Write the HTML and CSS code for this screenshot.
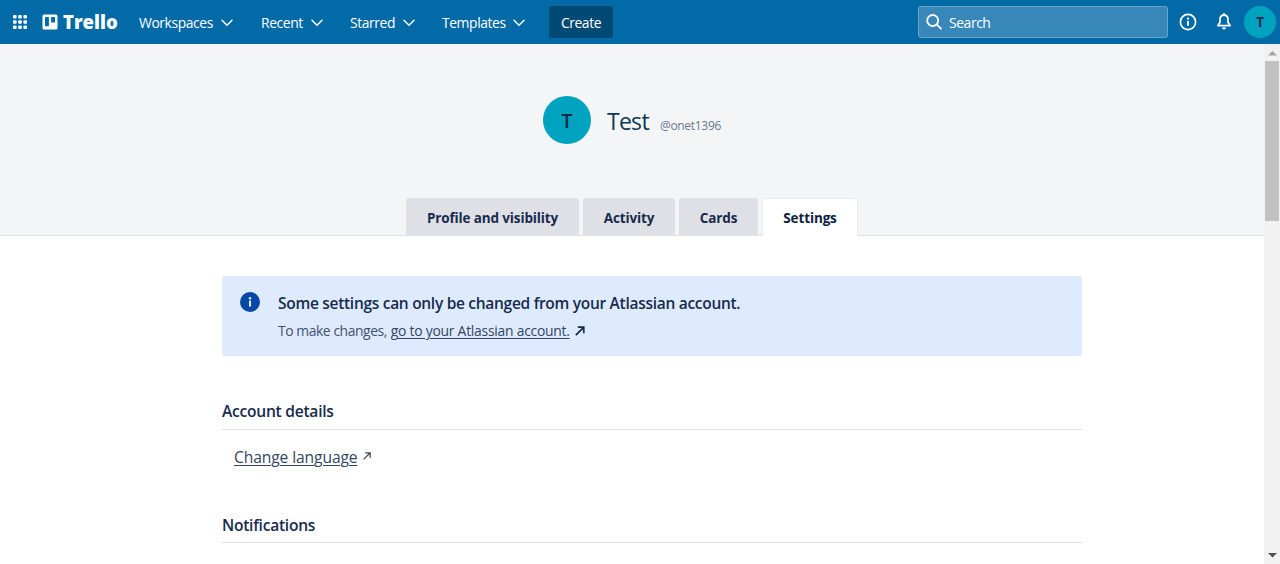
FILE: index.html
```
<!DOCTYPE html>
<html lang="en">
<head>
<meta charset="utf-8">
<title>Settings | Trello</title>
<link rel="stylesheet" href="styles.css">
</head>
<body>
<header class="topbar">
  <svg class="apps" width="14" height="14" viewBox="0 0 14 14" fill="#fff"><rect width="3.6" height="3.6" rx="1"/><rect x="5.2" width="3.6" height="3.6" rx="1"/><rect x="10.4" width="3.6" height="3.6" rx="1"/><rect y="5.2" width="3.6" height="3.6" rx="1"/><rect x="5.2" y="5.2" width="3.6" height="3.6" rx="1"/><rect x="10.4" y="5.2" width="3.6" height="3.6" rx="1"/><rect y="10.4" width="3.6" height="3.6" rx="1"/><rect x="5.2" y="10.4" width="3.6" height="3.6" rx="1"/><rect x="10.4" y="10.4" width="3.6" height="3.6" rx="1"/></svg>
  <a class="brand">
    <svg width="16" height="16" viewBox="0 0 16 16"><path fill="#fff" fill-rule="evenodd" d="M2 .5h12A1.500 1.500 0 0 1 15.500 2v12a1.500 1.500 0 0 1-1.500 1.500H2A1.500 1.500 0 0 1 .5 14V2A1.500 1.500 0 0 1 2 .5zM3.500 2.900a.5.5 0 0 0-.5.5v8.300a.5.5 0 0 0 .5.5h2.900a.5.5 0 0 0 .5-.5V3.400a.5.5 0 0 0-.5-.5zM9.600 2.900a.5.5 0 0 0-.5.5v4.700a.5.5 0 0 0 .5.5h2.900a.5.5 0 0 0 .5-.5V3.400a.5.5 0 0 0-.5-.5z"/></svg>
    <span>Trello</span>
  </a>
  <nav class="menu">
    <a class="item workspaces">Workspaces<svg class="chev" viewBox="0 0 12 8"><path d="M1 1.200l5 5 5-5"/></svg></a>
    <a class="item recent">Recent<svg class="chev" viewBox="0 0 12 8"><path d="M1 1.200l5 5 5-5"/></svg></a>
    <a class="item starred">Starred<svg class="chev" viewBox="0 0 12 8"><path d="M1 1.200l5 5 5-5"/></svg></a>
    <a class="item templates">Templates<svg class="chev" viewBox="0 0 12 8"><path d="M1 1.200l5 5 5-5"/></svg></a>
  </nav>
  <button class="create">Create</button>
  <div class="search">
    <svg width="16" height="16" viewBox="0 0 16 16" fill="none" stroke="#fff" stroke-width="1.800" stroke-linecap="round"><circle cx="6.700" cy="6.500" r="5.500"/><path d="M10.900 10.700l4 4"/></svg>
    <span>Search</span>
  </div>
  <svg class="info" width="18" height="18" viewBox="0 0 18 18"><circle cx="9" cy="9" r="7.600" fill="none" stroke="#fff" stroke-width="1.700"/><circle cx="9" cy="5.700" r="1.100" fill="#fff"/><path d="M9 8v4.800" stroke="#fff" stroke-width="1.800"/></svg>
  <svg class="bell" width="16" height="18" viewBox="0 0 16 18"><path d="M8 2.200c-2.500 0-4 1.900-4 4.300v2.800L1.900 12.700h12.200L12 9.300V6.500c0-2.400-1.500-4.300-4-4.300z" fill="none" stroke="#fff" stroke-width="1.700" stroke-linejoin="round"/><path d="M8 .8v1.500" stroke="#fff" stroke-width="1.800" stroke-linecap="round"/><path d="M6 14.600h4a2 2 0 0 1-4 0z" fill="#fff"/></svg>
  <div class="avatar small">T</div>
</header>
<div class="viewport">
  <main class="page">
    <section class="profile">
      <div class="identity">
        <div class="avatar large">T</div>
        <h1>Test</h1>
        <span class="handle">@onet1396</span>
      </div>
      <div class="tabs">
        <a class="tab visibility">Profile and visibility</a>
        <a class="tab activity">Activity</a>
        <a class="tab cards">Cards</a>
        <a class="tab active">Settings</a>
      </div>
    </section>
    <section class="content">
      <div class="notice">
        <svg class="notice-icon" width="20" height="20" viewBox="0 0 20 20"><circle cx="10" cy="10" r="10" fill="#0747a6"/><circle cx="10" cy="6.200" r="1.200" fill="#deebff"/><path d="M10 8.600v6" stroke="#deebff" stroke-width="2"/></svg>
        <div>
          <h2>Some settings can only be changed from your Atlassian account.</h2>
          <p><span>To make changes,</span><a>go to your Atlassian account.</a><svg width="10" height="10" viewBox="0 0 10 10" fill="none" stroke="#172b4d" stroke-width="1.700"><path d="M.8 9.200L8.400 1.600M2.800 1.200h6v6"/></svg></p>
        </div>
      </div>
      <h3>Account details</h3>
      <div class="language"><a>Change language</a><svg width="8" height="8" viewBox="0 0 8 8" fill="none" stroke="#344563" stroke-width="1.200"><path d="M.6 7.400L7 1M2.300.9h4.900v4.900"/></svg></div>
      <h3>Notifications</h3>
    </section>
  </main>
  <div class="scrollbar">
    <svg width="9" height="5" viewBox="0 0 9 5"><path d="M0 4.500L4.500 0 9 4.500z" fill="#a3a3a3"/></svg>
    <div class="thumb"></div>
    <svg class="down" width="9" height="5" viewBox="0 0 9 5"><path d="M0 0h9L4.500 4.500z" fill="#505050"/></svg>
  </div>
</div>
</body>
</html>
```
FILE: styles.css
```
* { box-sizing: border-box; }
body {
  margin: 0;
  height: 564px;
  overflow: hidden;
  display: flex;
  flex-direction: column;
  font-family: "Open Sans", "Noto Sans", sans-serif;
  color: #172b4d;
  background: #fff;
}
svg { display: block; flex: none; }
h1, h2, h3, p { margin: 0; }

.topbar {
  height: 44px;
  flex: none;
  display: flex;
  align-items: center;
  padding: 0 4px 0 13px;
  background: #026aa7;
  color: #fff;
  font-size: 13.900px;
  letter-spacing: -0.42px;
}
.brand { display: flex; align-items: center; width: 97px; margin-left: 15px; }
.brand span {
  margin-left: 5px;
  font-size: 18.500px;
  font-weight: 800;
  line-height: 24px;
  letter-spacing: 0;
}
.menu { display: flex; }
.item { display: flex; align-items: center; justify-content: space-between; line-height: 20px; padding-top: 2px; }
.chev { width: 12px; height: 8px; margin-top: -1px; fill: none; stroke: #fff; stroke-width: 1.500; stroke-linecap: round; }
.workspaces { width: 94px; }
.recent { width: 62px; margin-left: 28px; }
.starred { width: 65px; margin-left: 27px; }
.templates { width: 83px; margin-left: 27px; }
.create {
  width: 64px;
  height: 32px;
  margin-left: 24px;
  padding: 0;
  border: 0;
  border-radius: 3px;
  background: #014a75;
  color: #fff;
  font: inherit;
  letter-spacing: inherit;
}
.search {
  display: flex;
  align-items: center;
  width: 250px;
  height: 32px;
  margin-left: auto;
  padding-left: 7px;
  border: 1px solid #67a6ca;
  border-radius: 3px;
  background: #3788b9;
}
.search span { margin-left: 7px; line-height: 20px; padding-top: 1px; }
.info { margin-left: 11px; }
.bell { margin: 0 12px 0 19px; }
.avatar {
  display: flex;
  align-items: center;
  justify-content: center;
  border-radius: 50%;
  background: #00a3bf;
  color: #172b4d;
  font-weight: 600;
}
.small { width: 32px; height: 32px; font-size: 13.500px; font-weight: 700; }
.large { width: 48px; height: 48px; font-size: 20px; }

.viewport { display: flex; flex: 1; min-height: 0; }
.page { flex: 1; overflow: hidden; }
.profile {
  display: flex;
  flex-direction: column;
  justify-content: space-between;
  align-items: center;
  height: 192px;
  padding-top: 52px;
  background: #f4f5f7;
  border-bottom: 1px solid #dfe1e6;
}
.identity { display: flex; align-items: center; height: 48px; }
.identity h1 { margin: 2px 0 0 16px; width: 53px; font-size: 23px; font-weight: 500; line-height: 30px; letter-spacing: -0.7px; color: #0c3953; }
.handle { margin-top: 12px; font-size: 12px; letter-spacing: -0.3px; line-height: 16px; color: #6b778c; }
.tabs { display: flex; gap: 4px; height: 38px; margin-bottom: -1px; }
.tab {
  display: flex;
  align-items: center;
  justify-content: center;
  padding-top: 3px;
  border-radius: 3px 3px 0 0;
  border-bottom: 1px solid #dfe1e6;
  background: #dfe0e6;
  font-size: 13.500px;
  font-weight: 700;
  letter-spacing: -0.13px;
}
.visibility { width: 173px; }
.activity { width: 92px; }
.cards { width: 79px; }
.active { width: 96px; padding-top: 2px; background: #fff; border: 1px solid #e8eaed; border-bottom-color: #fff; color: #091e42; }

.content { width: 860px; margin: 40px 0 0 222px; }
.notice {
  display: flex;
  height: 80px;
  padding: 16px 18px;
  border-radius: 3px;
  background: #deebff;
}
.notice-icon { margin-right: 18px; }
.notice h2 { margin-top: -1px; font-size: 15.500px; font-weight: 570; line-height: 24px; letter-spacing: -0.29px; }
.notice p { display: flex; align-items: center; margin-top: 6px; font-size: 13.900px; line-height: 20px; color: #42526e; }
.notice p span { letter-spacing: -0.44px; }
.notice p a { margin-left: 4px; letter-spacing: -0.25px; }
.notice p svg { margin-left: 5px; }
a { text-underline-offset: 2px; }
.notice a, .language a { text-decoration: underline; text-decoration-thickness: 1px; color: #344563; }
h3 {
  height: 34px;
  margin-top: 40px;
  border-bottom: 1px solid #dfe1e6;
  font-size: 15.600px;
  font-weight: 570;
  line-height: 31px;
  letter-spacing: -0.26px;
}
.language { display: flex; align-items: center; height: 24px; margin: 15px 0 0 12px; font-size: 15.600px; letter-spacing: -0.1px; }
.language svg { margin: -3px 0 0 6px; }
.language + h3 { margin-top: 40px; line-height: 32px; }

.scrollbar {
  display: flex;
  flex-direction: column;
  align-items: center;
  width: 16px;
  padding: 7px 0 6px;
  background: #f1f1f1;
}
.thumb { width: 14px; height: 160px; margin-top: 5px; background: #c1c1c1; }
.down { margin-top: auto; }
```
